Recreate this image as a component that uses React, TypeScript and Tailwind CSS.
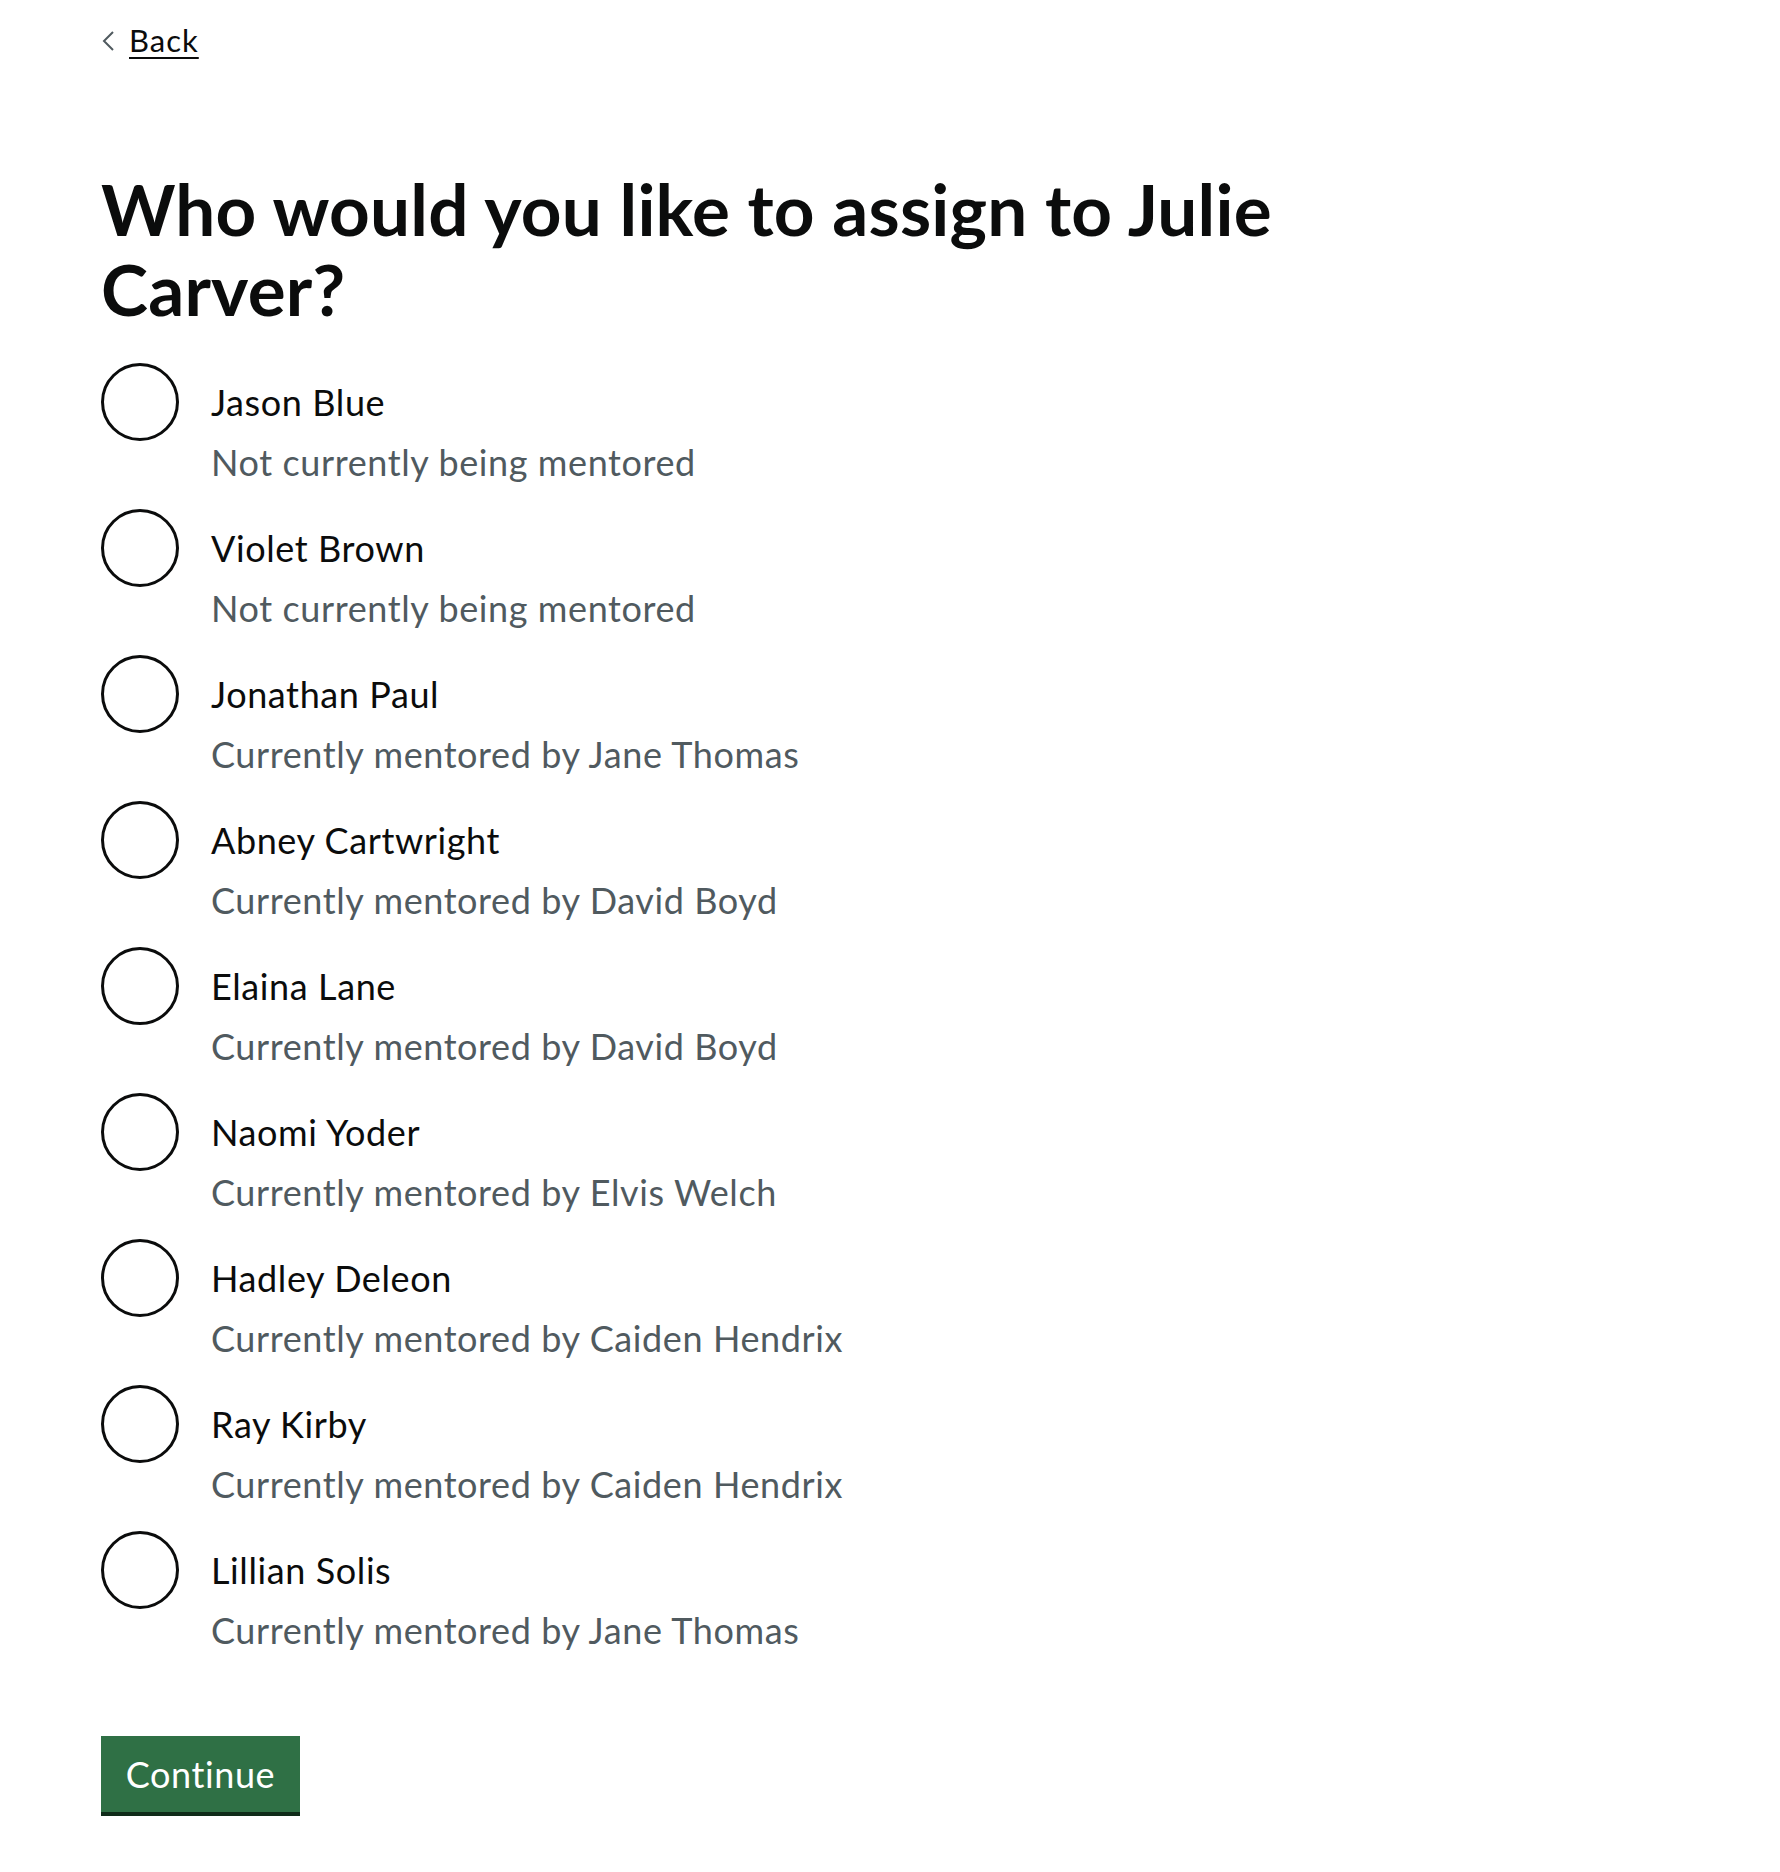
import React from "react";

const people = [
  { name: "Jason Blue", hint: "Not currently being mentored" },
  { name: "Violet Brown", hint: "Not currently being mentored" },
  { name: "Jonathan Paul", hint: "Currently mentored by Jane Thomas" },
  { name: "Abney Cartwright", hint: "Currently mentored by David Boyd" },
  { name: "Elaina Lane", hint: "Currently mentored by David Boyd" },
  { name: "Naomi Yoder", hint: "Currently mentored by Elvis Welch" },
  { name: "Hadley Deleon", hint: "Currently mentored by Caiden Hendrix" },
  { name: "Ray Kirby", hint: "Currently mentored by Caiden Hendrix" },
  { name: "Lillian Solis", hint: "Currently mentored by Jane Thomas" },
];

export default function App() {
  return (
    <div
      className="min-h-[1872px] bg-white text-[#0b0c0c] pl-[101px]"
      style={{ fontFamily: "Lato, 'Noto Sans', 'Liberation Sans', sans-serif" }}
    >
      <div className="pt-[22px]">
        <a href="#" className="inline-flex items-center gap-[15px] text-[31px] leading-[36px] tracking-[1px] text-[#0b0c0c]">
          <svg width="12" height="24" viewBox="0 0 12 24" className="ml-[1px] mt-[1px]" aria-hidden="true">
            <polyline points="11,3 2,12 11,21" fill="none" stroke="#505a5f" strokeWidth="2" />
          </svg>
          <span className="underline decoration-2 underline-offset-[5px]">Back</span>
        </a>
      </div>

      <h1 className="mt-[110px] w-[1200px] text-[71px] leading-[80px] font-bold tracking-[0.2px]">
        Who would you like to assign to Julie Carver?
      </h1>

      <div className="mt-[34px] flex flex-col gap-[23px]">
        {people.map((p) => (
          <label key={p.name} className="flex items-start gap-[32px] cursor-pointer">
            <span className="block w-[78px] h-[78px] rounded-full border-[3px] border-[#0b0c0c] shrink-0" />
            <span className="flex flex-col pt-[15px] tracking-[0.6px]">
              <span className="text-[36px] leading-[48px] text-[#0b0c0c]">{p.name}</span>
              <span className="mt-[12px] text-[36px] leading-[48px] text-[#505a5f]">{p.hint}</span>
            </span>
          </label>
        ))}
      </div>

      <button
        type="button"
        className="mt-[82px] flex items-center justify-center w-[199px] h-[76px] bg-[#2f7045] text-white text-[36px] tracking-[0.6px] shadow-[0_4px_0_#0f2b19]"
      >
        Continue
      </button>
    </div>
  );
}
